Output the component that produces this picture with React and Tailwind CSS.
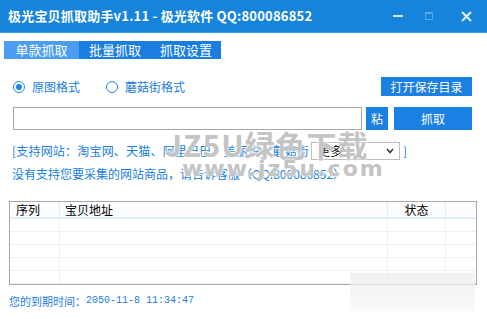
import { useState } from 'react'

const cjk = { fontFamily: '"Noto Sans CJK SC", "Noto Sans", sans-serif' }

function Radio({ checked, label, onClick }) {
  return (
    <button onClick={onClick} className="flex items-center gap-[7px] text-[12px] text-[#1a7ee0]">
      <span className="w-[12px] h-[12px] rounded-full border border-[#1a86e8] flex items-center justify-center bg-white">
        {checked && <span className="w-[6px] h-[6px] rounded-full bg-[#1a86e8]" />}
      </span>
      {label}
    </button>
  )
}

function App() {
  const [tab, setTab] = useState(0)
  const [fmt, setFmt] = useState(0)
  const tabs = ['单款抓取', '批量抓取', '抓取设置']
  const rows = [0, 1, 2, 3, 4]

  return (
    <div className="w-[487px] h-[319px] bg-white relative overflow-hidden" style={cjk}>
      {/* title bar */}
      <div className="h-[33px] bg-[#1784dc] border-b border-[#3d9be6] flex items-center pl-[8px] pr-[14px]">
        <span className="text-white font-bold text-[13px] tracking-[0.2px]">极光宝贝抓取助手v1.11 - 极光软件 QQ:800086852</span>
        <div className="ml-auto flex items-center">
          <span className="w-[10px] h-[2px] bg-[#d6e9fa] mr-[22px]" />
          <span className="w-[8px] h-[8px] border border-[#5aa6e6] border-t-2 mr-[28px]" />
          <svg width="11" height="11" viewBox="0 0 11 11" className="mr-[1px]">
            <path d="M1 1 L10 10 M10 1 L1 10" stroke="#e6f2fc" strokeWidth="2" />
          </svg>
        </div>
      </div>

      {/* tabs */}
      <div className="flex mt-[8px] ml-[4px] h-[18px]">
        {tabs.map((t, i) => (
          <button
            key={t}
            onClick={() => setTab(i)}
            className={`text-[13px] leading-[18px] text-white ${i === 0 ? 'w-[75px]' : 'w-[71px] pl-[1px]'} ${tab === i ? 'bg-[#4a9df0]' : 'bg-[#1a7ee0]'}`}
          >
            {t}
          </button>
        ))}
      </div>

      {/* format row */}
      <div className="flex items-center mt-[18px] pl-[13px] pr-[15px] h-[19px]">
        <Radio checked={fmt === 0} label="原图格式" onClick={() => setFmt(0)} />
        <div className="w-[26px]" />
        <Radio checked={fmt === 1} label="蘑菇街格式" onClick={() => setFmt(1)} />
        <button className="ml-auto w-[91px] h-[19px] bg-[#1a80e2] text-white text-[12px] leading-[19px]">打开保存目录</button>
      </div>

      {/* url row */}
      <div className="flex items-center mt-[11px] pl-[13px] pr-[15px] h-[23px]">
        <input className="w-[349px] h-[23px] border border-[#a6a6a6] outline-none px-[4px] text-[12px]" />
        <button className="ml-[4px] w-[22px] h-[23px] bg-[#1a80e2] text-white text-[12px]">粘</button>
        <button className="ml-[6px] w-[78px] h-[23px] bg-[#1a80e2] text-white text-[12px]">抓取</button>
      </div>

      {/* support line */}
      <div className="flex items-center mt-[12px] pl-[12px] h-[18px] text-[12px] text-[#1a7ee0] tracking-[0.2px]">
        <span>[支持网站：淘宝网、天猫、阿里巴巴、美丽说、蘑菇街</span>
        <div className="ml-[2px] w-[89px] h-[18px] border border-[#bdbdbd] bg-white flex items-center pl-[6px] pr-[5px] text-black">
          <span className="text-[12px]">更多...</span>
          <svg width="8" height="6" viewBox="0 0 8 6" className="ml-auto">
            <path d="M1 1 L4 4.5 L7 1" stroke="#333" strokeWidth="1.5" fill="none" />
          </svg>
        </div>
        <span className="ml-[3px]">]</span>
      </div>
      <div className="mt-[6px] pl-[12px] text-[12px] leading-[16px] text-[#1a7ee0]">
        没有支持您要采集的网站商品，请告诉客服（QQ:800086852）
      </div>

      {/* table */}
      <div className="mt-[19px] mx-[9px] w-[468px] h-[84px] border border-[#a8a8a8] bg-white overflow-hidden">
        <div className="grid grid-cols-[50px_328px_58px_1fr] h-[17px] bg-[#fbfcfe] border-b-2 border-[#e3edf7] text-[12px] leading-[16px] text-black">
          <div className="pl-[6px] border-r border-[#e3edf7]">序列</div>
          <div className="pl-[5px] border-r border-[#e3edf7]">宝贝地址</div>
          <div className="text-center border-r border-[#e3edf7]">状态</div>
          <div />
        </div>
        {rows.map((r) => (
          <div key={r} className="grid grid-cols-[50px_328px_58px_1fr] h-[13px] border-b border-[#eef0f3]">
            <div className="border-r border-[#eef0f3]" />
            <div className="border-r border-[#eef0f3]" />
            <div className="border-r border-[#eef0f3]" />
            <div />
          </div>
        ))}
      </div>

      {/* footer */}
      <div className="mt-[8px] pl-[9px] flex items-center text-[11px] leading-[16px] text-[#1a7ee0]">
        <span>您的到期时间：</span>
        <span className="text-[10px]" style={{ fontFamily: '"Liberation Mono", monospace' }}>2050-11-8 11:34:47</span>
      </div>

      {/* watermark */}
      <div className="absolute left-[350px] top-[273px] w-[125px] h-[38px] bg-gradient-to-b from-[#ececec] to-[#f8f8f8] opacity-80 pointer-events-none" />
      <div
        className="absolute left-[165px] top-[128px] pointer-events-none text-[#c4c4c4] font-bold text-[30px] leading-[32px] tracking-[1px]"
        style={{ fontFamily: '"Noto Sans CJK SC", sans-serif', textShadow: '0 0 2px #fff, 0 0 2px #fff' }}
      >
        JZ5U绿色下载
      </div>
      <div
        className="absolute left-[182px] top-[158px] pointer-events-none text-[#c4c4c4] font-bold text-[22px] leading-[22px] tracking-[2px]"
        style={{ fontFamily: '"DejaVu Sans", sans-serif', textShadow: '0 0 2px #fff, 0 0 2px #fff' }}
      >
        www.jz5u.com
      </div>
    </div>
  )
}

export default App
